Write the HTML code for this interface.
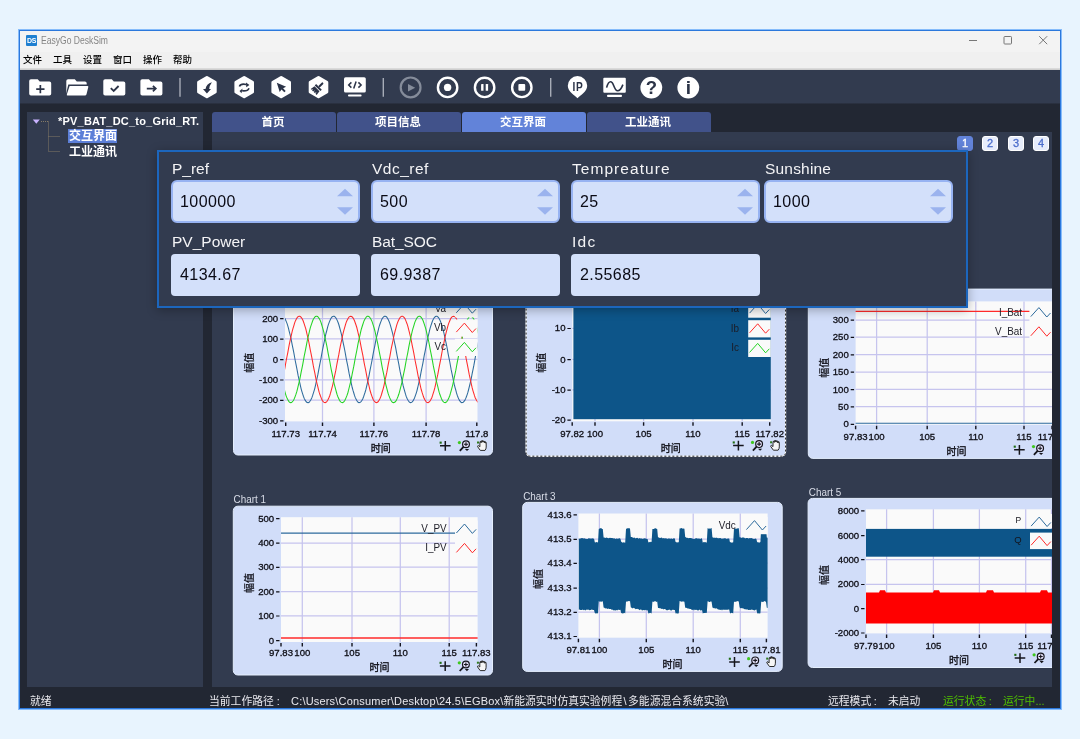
<!DOCTYPE html><html lang="zh"><head><meta charset="utf-8"><title>EasyGo DeskSim</title><style>
*{margin:0;padding:0;box-sizing:border-box}
html,body{width:1080px;height:739px;overflow:hidden}
body{background:#e8f4fe;font-family:"Liberation Sans","Noto Sans CJK SC",sans-serif;position:relative}
.abs{position:absolute}
#win{position:absolute;left:19px;top:30px;width:1042px;height:679px;background:#222733;border:1px solid #2b78dc;box-shadow:0 0 0 1px #86bcfb;overflow:hidden}
/* coordinates inside #inner are page coordinates */
#inner{position:absolute;left:-20px;top:-31px;width:1080px;height:739px;will-change:transform}
#title{left:20px;top:30px;width:1041px;height:22px;background:#f3f3f3}
#menu{left:20px;top:52px;width:1041px;height:17px;background:#f0f0f0}
#menuline{left:20px;top:68px;width:1041px;height:2px;background:linear-gradient(#e0e0e0,#c8c8c8)}
#tb{left:20px;top:70px;width:1041px;height:34px;background:linear-gradient(#323b4f 0,#323b4f 32.8px,#262b39 33.8px)}
.mi{position:absolute;top:54px;font-size:9.5px;font-weight:500;color:#000;line-height:12px;white-space:nowrap}
#ttl{left:41px;top:34.5px;font-size:10px;transform:scaleX(0.855);transform-origin:0 0;color:#858585;line-height:12px;white-space:nowrap}
#logo{left:26px;top:35px;width:11px;height:11px;background:#1f7fd0;color:#fff;font-size:7px;font-weight:bold;line-height:11px;text-align:center;letter-spacing:-0.4px;border-radius:1px}
#lp{left:27px;top:112px;width:176px;height:575px;background:#323b4f}
#rp{left:212px;top:132px;width:840px;height:555px;background:#323b4f;overflow:hidden}
.tab{position:absolute;top:112px;height:21px;width:124px;background:#41528a;color:#fff;font-weight:bold;font-size:11.5px;text-indent:-2px;line-height:20px;text-align:center;border-radius:3px 3px 0 0}
.tab.on{background:#6283d9}
.pg{position:absolute;top:136px;width:16px;height:15px;border-radius:3px;font-size:11px;line-height:13px;-webkit-text-stroke:0.3px;text-align:center;border:1px solid #fff;background:#e6ecfb;color:#4b6dcc;font-weight:normal}
.pg.on{background:#6283d9;border-color:#6283d9;color:#fff}
.st{position:absolute;top:694.6px;font-size:10.8px;line-height:13px;color:#e8e8ee;white-space:nowrap}
.tree{position:absolute;color:#fff;font-weight:bold;white-space:nowrap}
</style></head><body>
<div id="win"><div id="inner">
<div id="title" class="abs"></div>
<div id="logo" class="abs">DS</div>
<div id="ttl" class="abs">EasyGo DeskSim</div>
<svg class="abs" style="left:960px;top:30px" width="100" height="22" viewBox="0 0 100 22"><path d="M9 10.5h8" stroke="#777" stroke-width="1" fill="none"/><rect x="44" y="6.5" width="7.5" height="7.5" rx="0.8" stroke="#777" stroke-width="1" fill="none"/><path d="M79.2 6.2l8 8M87.2 6.2l-8 8" stroke="#777" stroke-width="1" fill="none"/></svg>
<div id="menu" class="abs"></div><div id="menuline" class="abs"></div>
<div class="mi" style="left:23px">文件</div>
<div class="mi" style="left:53px">工具</div>
<div class="mi" style="left:83px">设置</div>
<div class="mi" style="left:113px">窗口</div>
<div class="mi" style="left:143px">操作</div>
<div class="mi" style="left:173px">帮助</div>
<div id="tb" class="abs"></div>
<svg class="abs" style="left:20px;top:70px" width="1041" height="34" viewBox="20 70 1041 34"><path d="M29.2 81.1 Q29.2 79.3 31.0 79.3 H37.7 L39.7 81.5 H49.400000000000006 Q51.2 81.5 51.2 83.3 V93.7 Q51.2 95.5 49.400000000000006 95.5 H31.0 Q29.2 95.5 29.2 93.7 Z" fill="#fff"/><path d="M36.2 89.2h8.3M40.35 85.1v8.2" stroke="#2b3347" stroke-width="1.7" fill="none"/><path d="M66.3 81.1 Q66.3 79.3 68.1 79.3 H74.8 L76.8 81.5 H84.89999999999999 Q86.69999999999999 81.5 86.69999999999999 83.3 V93.7 Q86.69999999999999 95.5 84.89999999999999 95.5 H68.1 Q66.3 95.5 66.3 93.7 Z" fill="#fff"/><path d="M68.3 84.6H89.3L86.8 96.5H65.3Z" fill="#323b4f"/><path d="M69.6 85.9H87.5Q88.6 85.9 88.3 87L86.5 94.3Q86.2 95.5 84.9 95.5H67.5Q66.5 95.5 66.9 94.3Z" fill="#fff"/><path d="M103.3 81.1 Q103.3 79.3 105.1 79.3 H111.8 L113.8 81.5 H123.5 Q125.3 81.5 125.3 83.3 V93.7 Q125.3 95.5 123.5 95.5 H105.1 Q103.3 95.5 103.3 93.7 Z" fill="#fff"/><path d="M110.8 88.2l2.9 2.8 4.9-5" stroke="#2b3347" stroke-width="1.8" fill="none"/><path d="M140.4 81.1 Q140.4 79.3 142.20000000000002 79.3 H148.9 L150.9 81.5 H160.6 Q162.4 81.5 162.4 83.3 V93.7 Q162.4 95.5 160.6 95.5 H142.20000000000002 Q140.4 95.5 140.4 93.7 Z" fill="#fff"/><path d="M146.8 88.6h8.4M152.9 85.9l2.9 2.7-2.9 2.7" stroke="#2b3347" stroke-width="1.7" fill="none"/><path d="M180.0 78v18.8" stroke="#a7acb7" stroke-width="1.4"/><path d="M383.3 78v18.8" stroke="#a7acb7" stroke-width="1.4"/><path d="M550.7 78v18.8" stroke="#a7acb7" stroke-width="1.4"/><polygon points="206.90,77.70 215.10,82.45 215.10,91.95 206.90,96.70 198.70,91.95 198.70,82.45" fill="#fff" stroke="#fff" stroke-width="3.2" stroke-linejoin="round"/><polygon points="244.20,77.70 252.40,82.45 252.40,91.95 244.20,96.70 236.00,91.95 236.00,82.45" fill="#fff" stroke="#fff" stroke-width="3.2" stroke-linejoin="round"/><polygon points="281.20,77.70 289.40,82.45 289.40,91.95 281.20,96.70 273.00,91.95 273.00,82.45" fill="#fff" stroke="#fff" stroke-width="3.2" stroke-linejoin="round"/><polygon points="318.50,77.70 326.70,82.45 326.70,91.95 318.50,96.70 310.30,91.95 310.30,82.45" fill="#fff" stroke="#fff" stroke-width="3.2" stroke-linejoin="round"/><path d="M211.9 82.2 Q206.2 84.0 205.5 88.9 L203.0 88.9 L206.9 93.4 L211.0 88.9 L209.2 88.9 Q209.5 85.4 211.9 82.2 Z" fill="#2b3347"/><path d="M239.4 86.5 Q240.6 83.3 246.3 84.5" stroke="#2b3347" stroke-width="1.6" fill="none"/><path d="M246.0 82.6 L249.4 85.1 L246.3 87.2 Z" fill="#2b3347"/><path d="M249.0 88.2 Q247.8 91.4 242.1 90.8" stroke="#2b3347" stroke-width="1.6" fill="none"/><path d="M242.6 88.6 L239.5 90.9 L241.5 93.3 Z" fill="#2b3347"/><path d="M276.8 82.8 L286.1 86.7 L283.1 88.2 L285.7 91.0 L284.3 92.3 L281.5 89.6 L279.7 92.1 Z" fill="#2b3347"/><g transform="translate(-0.3 0.3) rotate(45 318.5 87.3)" fill="#2b3347"><rect x="317.5" y="80.4" width="2" height="6" rx="1"/><rect x="314.5" y="86.2" width="8" height="2"/><path d="M315.0 89h7l0.6 4.6h-1.6l-.5-2-.5 2h-1.5l-.4-2-.5 2h-1.5l-.4-2-.5 2h-1z"/></g><rect x="344" y="77.2" width="21.8" height="15.3" rx="1.6" fill="#fff"/><rect x="348" y="94.6" width="13.6" height="1.9" rx="0.9" fill="#fff"/><path d="M351.4 82.4l-2.7 2.6 2.7 2.6M358.4 82.4l2.7 2.6-2.7 2.6M356.1 81.5l-2.4 7" stroke="#2b3347" stroke-width="1.5" fill="none"/><circle cx="410.6" cy="87.4" r="9.9" fill="none" stroke="#858c9a" stroke-width="2.2"/><path d="M408 83.9v7.6l7.2-3.8z" fill="#858c9a"/><circle cx="447.6" cy="87.4" r="9.7" fill="none" stroke="#fff" stroke-width="2.4"/><circle cx="447.6" cy="87.4" r="3.7" fill="#fff"/><circle cx="484.6" cy="87.4" r="9.7" fill="none" stroke="#fff" stroke-width="2.4"/><rect x="481.1" y="84" width="2.4" height="6.8" rx="0.4" fill="#fff"/><rect x="485.7" y="84" width="2.4" height="6.8" rx="0.4" fill="#fff"/><circle cx="521.8" cy="87.4" r="9.7" fill="none" stroke="#fff" stroke-width="2.4"/><rect x="518.4" y="84" width="6.8" height="6.8" rx="1" fill="#fff"/><path d="M577.5 98.3 C574.5 95.2 567.8 91.6 567.8 85.8 A9.7 9.7 0 0 1 587.2 85.8 C587.2 91.6 580.5 95.2 577.5 98.3Z" fill="#fff"/><text transform="translate(578 90.6) scale(0.78 1)" x="0" y="0" letter-spacing="0.9" font-size="13" font-weight="bold" text-anchor="middle" fill="#2b3347" font-family="Liberation Sans, sans-serif">IP</text><rect x="603.3" y="77.8" width="22.5" height="15" rx="1" fill="#fff"/><rect x="607" y="94.8" width="15" height="2.1" rx="1" fill="#fff"/><path d="M606.6 87.6C607.8 83.2 609.4 81.6 610.9 81.8C614 82.2 613.8 90.4 617.6 90.8C620 91 621.6 88 622.9 84.6" stroke="#2b3347" stroke-width="1.6" fill="none"/><circle cx="651.3" cy="87.6" r="10.9" fill="#fff"/><text x="651.4" y="94.3" font-size="18.5" font-weight="bold" text-anchor="middle" fill="#2b3347" font-family="Liberation Sans, sans-serif">?</text><circle cx="688.3" cy="87.6" r="10.9" fill="#fff"/><text x="688.5" y="94.4" font-size="19" font-weight="bold" text-anchor="middle" fill="#2b3347" font-family="Liberation Sans, sans-serif">i</text></svg>
<div id="lp" class="abs"></div>
<svg class="abs" style="left:27px;top:112px" width="50" height="50" viewBox="27 112 50 50"><path d="M32.8 119.6h7l-3.5 4.2z" fill="#c9b3ff"/><path d="M41 121.5h8M48.5 121.5v30M48.5 136.5h11M48.5 151.5h11" stroke="#857a66" stroke-width="1" stroke-dasharray="1 1" fill="none"/></svg>
<div class="tree" style="left:58px;top:115px;font-size:11px;line-height:13px;letter-spacing:0.21px" id="troot">*PV_BAT_DC_to_Grid_RT.</div>
<div class="abs" style="left:68px;top:129px;width:49px;height:14px;background:#5c7fd8"></div>
<div class="tree" style="left:69px;top:129px;font-size:12px;line-height:14px">交互界面</div>
<div class="tree" style="left:69px;top:145px;font-size:12px;line-height:14px">工业通讯</div>
<div class="tab" style="left:212px">首页</div>
<div class="tab" style="left:337px">项目信息</div>
<div class="tab on" style="left:462px">交互界面</div>
<div class="tab" style="left:587px">工业通讯</div>
<div id="rp" class="abs"></div>
<svg class="abs" style="left:212px;top:132px" width="840" height="555" viewBox="212 132 840 555" font-family="Liberation Sans, Noto Sans CJK SC, sans-serif"><rect x="233.5" y="286.0" width="259.0" height="169.0" rx="4.5" fill="#d1ddf9" stroke="#e4eefd" stroke-width="1"/><rect x="285.0" y="297.0" width="192.5" height="124.4" fill="#fafafa"/><path d="M285.0 318.5H477.5M285.0 338.9H477.5M285.0 359.4H477.5M285.0 379.8H477.5M285.0 400.2H477.5M322.5 297.0V421.4M373.9 297.0V421.4M426.1 297.0V421.4" stroke="#c6c4ee" stroke-width="1.25" fill="none"/><clipPath id="ca"><rect x="285" y="297" width="192.5" height="124.4"/></clipPath><g clip-path="url(#ca)"><path d="M284.0 317.2L284.8 318.3L285.5 319.7L286.2 321.4L287.0 323.4L287.8 325.8L288.5 328.4L289.2 331.3L290.0 334.4L290.8 337.7L291.5 341.2L292.2 344.9L293.0 348.7L293.8 352.6L294.5 356.5L295.2 360.5L296.0 364.4L296.8 368.3L297.5 372.1L298.2 375.9L299.0 379.5L299.8 382.9L300.5 386.1L301.2 389.1L302.0 391.8L302.8 394.3L303.5 396.5L304.2 398.4L305.0 399.9L305.8 401.1L306.5 402.0L307.2 402.5L308.0 402.6L308.8 402.4L309.5 401.8L310.2 400.8L311.0 399.5L311.8 397.9L312.5 395.9L313.2 393.7L314.0 391.1L314.8 388.3L315.5 385.3L316.2 382.0L317.0 378.5L317.8 374.9L318.5 371.1L319.2 367.3L320.0 363.4L320.8 359.4L321.5 355.4L322.2 351.5L323.0 347.7L323.8 343.9L324.5 340.3L325.2 336.8L326.0 333.5L326.8 330.5L327.5 327.7L328.2 325.1L329.0 322.9L329.8 320.9L330.5 319.3L331.2 318.0L332.0 317.0L332.8 316.4L333.5 316.2L334.2 316.3L335.0 316.8L335.8 317.7L336.5 318.9L337.2 320.4L338.0 322.3L338.8 324.5L339.5 327.0L340.2 329.7L341.0 332.7L341.8 335.9L342.5 339.3L343.2 342.9L344.0 346.7L344.8 350.5L345.5 354.4L346.2 358.3L347.0 362.3L347.8 366.2L348.5 370.1L349.2 373.9L350.0 377.6L350.8 381.1L351.5 384.4L352.2 387.5L353.0 390.4L353.8 393.0L354.5 395.4L355.2 397.4L356.0 399.1L356.8 400.5L357.5 401.6L358.2 402.2L359.0 402.6L359.8 402.5L360.5 402.1L361.2 401.4L362.0 400.3L362.8 398.8L363.5 397.0L364.2 394.9L365.0 392.5L365.8 389.9L366.5 386.9L367.2 383.8L368.0 380.4L368.8 376.8L369.5 373.2L370.2 369.3L371.0 365.5L371.8 361.5L372.5 357.6L373.2 353.6L374.0 349.7L374.8 345.9L375.5 342.2L376.2 338.6L377.0 335.3L377.8 332.1L378.5 329.1L379.2 326.4L380.0 324.0L380.8 321.9L381.5 320.1L382.2 318.6L383.0 317.5L383.8 316.7L384.5 316.3L385.2 316.2L386.0 316.5L386.8 317.2L387.5 318.2L388.2 319.6L389.0 321.3L389.8 323.3L390.5 325.6L391.2 328.2L392.0 331.1L392.8 334.2L393.5 337.5L394.2 341.0L395.0 344.7L395.8 348.4L396.5 352.3L397.2 356.2L398.0 360.2L398.8 364.1L399.5 368.1L400.2 371.9L401.0 375.6L401.8 379.2L402.5 382.7L403.2 385.9L404.0 388.9L404.8 391.7L405.5 394.2L406.2 396.4L407.0 398.3L407.8 399.8L408.5 401.0L409.2 401.9L410.0 402.4L410.8 402.6L411.5 402.4L412.2 401.8L413.0 400.9L413.8 399.6L414.5 398.0L415.2 396.1L416.0 393.8L416.8 391.3L417.5 388.5L418.2 385.5L419.0 382.2L419.8 378.8L420.5 375.1L421.2 371.4L422.0 367.5L422.8 363.6L423.5 359.7L424.2 355.7L425.0 351.8L425.8 347.9L426.5 344.2L427.2 340.5L428.0 337.0L428.8 333.8L429.5 330.7L430.2 327.8L431.0 325.3L431.8 323.0L432.5 321.0L433.2 319.4L434.0 318.0L434.8 317.1L435.5 316.5L436.2 316.2L437.0 316.3L437.8 316.8L438.5 317.6L439.2 318.8L440.0 320.3L440.8 322.2L441.5 324.3L442.2 326.8L443.0 329.5L443.8 332.5L444.5 335.7L445.2 339.1L446.0 342.7L446.8 346.4L447.5 350.2L448.2 354.1L449.0 358.1L449.8 362.0L450.5 366.0L451.2 369.9L452.0 373.7L452.8 377.3L453.5 380.8L454.2 384.2L455.0 387.3L455.8 390.2L456.5 392.9L457.2 395.2L458.0 397.3L458.8 399.0L459.5 400.4L460.2 401.5L461.0 402.2L461.8 402.6L462.5 402.5L463.2 402.2L464.0 401.4L464.8 400.4L465.5 398.9L466.2 397.2L467.0 395.1L467.8 392.7L468.5 390.0L469.2 387.1L470.0 384.0L470.8 380.6L471.5 377.1L472.2 373.4L473.0 369.6L473.8 365.7L474.5 361.8L475.2 357.8L476.0 353.9L476.8 350.0L477.5 346.2L478.2 342.4" stroke="#2c6a9c" stroke-width="1.05" fill="none"/><path d="M284.0 372.1L284.8 368.3L285.5 364.4L286.2 360.5L287.0 356.5L287.8 352.6L288.5 348.7L289.2 344.9L290.0 341.2L290.8 337.7L291.5 334.4L292.2 331.3L293.0 328.4L293.8 325.8L294.5 323.4L295.2 321.4L296.0 319.7L296.8 318.3L297.5 317.2L298.2 316.6L299.0 316.2L299.8 316.3L300.5 316.7L301.2 317.4L302.0 318.5L302.8 320.0L303.5 321.8L304.2 323.9L305.0 326.3L305.8 328.9L306.5 331.9L307.2 335.0L308.0 338.4L308.8 342.0L309.5 345.6L310.2 349.5L311.0 353.3L311.8 357.3L312.5 361.2L313.2 365.2L314.0 369.1L314.8 372.9L315.5 376.6L316.2 380.2L317.0 383.5L317.8 386.7L318.5 389.7L319.2 392.4L320.0 394.8L320.8 396.9L321.5 398.7L322.2 400.2L323.0 401.3L323.8 402.1L324.5 402.5L325.2 402.6L326.0 402.3L326.8 401.6L327.5 400.6L328.2 399.2L329.0 397.5L329.8 395.5L330.5 393.2L331.2 390.6L332.0 387.7L332.8 384.6L333.5 381.3L334.2 377.8L335.0 374.1L335.8 370.4L336.5 366.5L337.2 362.6L338.0 358.6L338.8 354.7L339.5 350.7L340.2 346.9L341.0 343.2L341.8 339.6L342.5 336.1L343.2 332.9L344.0 329.9L344.8 327.1L345.5 324.6L346.2 322.4L347.0 320.5L347.8 319.0L348.5 317.8L349.2 316.9L350.0 316.4L350.8 316.2L351.5 316.4L352.2 317.0L353.0 317.9L353.8 319.2L354.5 320.8L355.2 322.7L356.0 325.0L356.8 327.5L357.5 330.3L358.2 333.3L359.0 336.6L359.8 340.0L360.5 343.7L361.2 347.4L362.0 351.3L362.8 355.2L363.5 359.1L364.2 363.1L365.0 367.0L365.8 370.9L366.5 374.6L367.2 378.3L368.0 381.8L368.8 385.0L369.5 388.1L370.2 391.0L371.0 393.5L371.8 395.8L372.5 397.8L373.2 399.4L374.0 400.8L374.8 401.7L375.5 402.3L376.2 402.6L377.0 402.5L377.8 402.0L378.5 401.2L379.2 400.0L380.0 398.5L380.8 396.6L381.5 394.5L382.2 392.0L383.0 389.3L383.8 386.3L384.5 383.1L385.2 379.7L386.0 376.1L386.8 372.4L387.5 368.6L388.2 364.7L389.0 360.7L389.8 356.8L390.5 352.8L391.2 348.9L392.0 345.1L392.8 341.5L393.5 338.0L394.2 334.6L395.0 331.5L395.8 328.6L396.5 325.9L397.2 323.6L398.0 321.5L398.8 319.8L399.5 318.4L400.2 317.3L401.0 316.6L401.8 316.2L402.5 316.3L403.2 316.6L404.0 317.4L404.8 318.4L405.5 319.9L406.2 321.6L407.0 323.7L407.8 326.1L408.5 328.8L409.2 331.7L410.0 334.8L410.8 338.2L411.5 341.7L412.2 345.4L413.0 349.2L413.8 353.1L414.5 357.0L415.2 361.0L416.0 364.9L416.8 368.8L417.5 372.6L418.2 376.4L419.0 379.9L419.8 383.3L420.5 386.5L421.2 389.5L422.0 392.2L422.8 394.6L423.5 396.8L424.2 398.6L425.0 400.1L425.8 401.3L426.5 402.1L427.2 402.5L428.0 402.6L428.8 402.3L429.5 401.7L430.2 400.7L431.0 399.3L431.8 397.7L432.5 395.7L433.2 393.4L434.0 390.8L434.8 387.9L435.5 384.8L436.2 381.5L437.0 378.0L437.8 374.4L438.5 370.6L439.2 366.8L440.0 362.8L440.8 358.9L441.5 354.9L442.2 351.0L443.0 347.2L443.8 343.4L444.5 339.8L445.2 336.4L446.0 333.1L446.8 330.1L447.5 327.3L448.2 324.8L449.0 322.6L449.8 320.7L450.5 319.1L451.2 317.8L452.0 316.9L452.8 316.4L453.5 316.2L454.2 316.4L455.0 316.9L455.8 317.8L456.5 319.1L457.2 320.7L458.0 322.6L458.8 324.8L459.5 327.3L460.2 330.1L461.0 333.1L461.8 336.4L462.5 339.8L463.2 343.4L464.0 347.2L464.8 351.0L465.5 354.9L466.2 358.9L467.0 362.8L467.8 366.8L468.5 370.6L469.2 374.4L470.0 378.0L470.8 381.5L471.5 384.8L472.2 387.9L473.0 390.8L473.8 393.4L474.5 395.7L475.2 397.7L476.0 399.3L476.8 400.7L477.5 401.7L478.2 402.3" stroke="#ff2a2a" stroke-width="1.05" fill="none"/><path d="M284.0 388.5L284.8 391.3L285.5 393.8L286.2 396.1L287.0 398.0L287.8 399.6L288.5 400.9L289.2 401.8L290.0 402.4L290.8 402.6L291.5 402.4L292.2 401.9L293.0 401.0L293.8 399.8L294.5 398.3L295.2 396.4L296.0 394.2L296.8 391.7L297.5 388.9L298.2 385.9L299.0 382.7L299.8 379.2L300.5 375.6L301.2 371.9L302.0 368.1L302.8 364.1L303.5 360.2L304.2 356.2L305.0 352.3L305.8 348.4L306.5 344.7L307.2 341.0L308.0 337.5L308.8 334.2L309.5 331.1L310.2 328.2L311.0 325.6L311.8 323.3L312.5 321.3L313.2 319.6L314.0 318.2L314.8 317.2L315.5 316.5L316.2 316.2L317.0 316.3L317.8 316.7L318.5 317.5L319.2 318.6L320.0 320.1L320.8 321.9L321.5 324.0L322.2 326.4L323.0 329.1L323.8 332.1L324.5 335.3L325.2 338.6L326.0 342.2L326.8 345.9L327.5 349.7L328.2 353.6L329.0 357.6L329.8 361.5L330.5 365.5L331.2 369.3L332.0 373.2L332.8 376.8L333.5 380.4L334.2 383.8L335.0 386.9L335.8 389.9L336.5 392.5L337.2 394.9L338.0 397.0L338.8 398.8L339.5 400.3L340.2 401.4L341.0 402.1L341.8 402.5L342.5 402.6L343.2 402.2L344.0 401.6L344.8 400.5L345.5 399.1L346.2 397.4L347.0 395.4L347.8 393.0L348.5 390.4L349.2 387.5L350.0 384.4L350.8 381.1L351.5 377.6L352.2 373.9L353.0 370.1L353.8 366.2L354.5 362.3L355.2 358.3L356.0 354.4L356.8 350.5L357.5 346.7L358.2 342.9L359.0 339.3L359.8 335.9L360.5 332.7L361.2 329.7L362.0 327.0L362.8 324.5L363.5 322.3L364.2 320.4L365.0 318.9L365.8 317.7L366.5 316.8L367.2 316.3L368.0 316.2L368.8 316.4L369.5 317.0L370.2 318.0L371.0 319.3L371.8 320.9L372.5 322.9L373.2 325.1L374.0 327.7L374.8 330.5L375.5 333.5L376.2 336.8L377.0 340.3L377.8 343.9L378.5 347.7L379.2 351.5L380.0 355.4L380.8 359.4L381.5 363.4L382.2 367.3L383.0 371.1L383.8 374.9L384.5 378.5L385.2 382.0L386.0 385.3L386.8 388.3L387.5 391.1L388.2 393.7L389.0 395.9L389.8 397.9L390.5 399.5L391.2 400.8L392.0 401.8L392.8 402.4L393.5 402.6L394.2 402.5L395.0 402.0L395.8 401.1L396.5 399.9L397.2 398.4L398.0 396.5L398.8 394.3L399.5 391.8L400.2 389.1L401.0 386.1L401.8 382.9L402.5 379.5L403.2 375.9L404.0 372.1L404.8 368.3L405.5 364.4L406.2 360.5L407.0 356.5L407.8 352.6L408.5 348.7L409.2 344.9L410.0 341.2L410.8 337.7L411.5 334.4L412.2 331.3L413.0 328.4L413.8 325.8L414.5 323.4L415.2 321.4L416.0 319.7L416.8 318.3L417.5 317.2L418.2 316.6L419.0 316.2L419.8 316.3L420.5 316.7L421.2 317.4L422.0 318.5L422.8 320.0L423.5 321.8L424.2 323.9L425.0 326.3L425.8 328.9L426.5 331.9L427.2 335.0L428.0 338.4L428.8 342.0L429.5 345.6L430.2 349.5L431.0 353.3L431.8 357.3L432.5 361.2L433.2 365.2L434.0 369.1L434.8 372.9L435.5 376.6L436.2 380.2L437.0 383.5L437.8 386.7L438.5 389.7L439.2 392.4L440.0 394.8L440.8 396.9L441.5 398.7L442.2 400.2L443.0 401.3L443.8 402.1L444.5 402.5L445.2 402.6L446.0 402.3L446.8 401.6L447.5 400.6L448.2 399.2L449.0 397.5L449.8 395.5L450.5 393.2L451.2 390.6L452.0 387.7L452.8 384.6L453.5 381.3L454.2 377.8L455.0 374.1L455.8 370.4L456.5 366.5L457.2 362.6L458.0 358.6L458.8 354.7L459.5 350.7L460.2 346.9L461.0 343.2L461.8 339.6L462.5 336.1L463.2 332.9L464.0 329.9L464.8 327.1L465.5 324.6L466.2 322.4L467.0 320.5L467.8 319.0L468.5 317.8L469.2 316.9L470.0 316.4L470.8 316.2L471.5 316.4L472.2 317.0L473.0 317.9L473.8 319.2L474.5 320.8L475.2 322.7L476.0 325.0L476.8 327.5L477.5 330.3L478.2 333.3" stroke="#22d422" stroke-width="1.05" fill="none"/></g><rect x="454.9" y="300.2" width="22.6" height="17.2" fill="#fafafa"/><path d="M456.3 312.8L464.4 303.8L472.3 313.2L476.0 309.2" stroke="#2c6a9c" stroke-width="1" fill="none"/><text transform="translate(446.0 311.8) scale(0.99 1)" font-size="10" text-anchor="end" fill="#1c1c26" >Va</text><rect x="454.9" y="319.5" width="22.6" height="17.2" fill="#fafafa"/><path d="M456.3 332.1L464.4 323.1L472.3 332.5L476.0 328.5" stroke="#ff2a2a" stroke-width="1" fill="none"/><text transform="translate(446.0 331.1) scale(0.99 1)" font-size="10" text-anchor="end" fill="#1c1c26" >Vb</text><rect x="454.9" y="338.8" width="22.6" height="17.2" fill="#fafafa"/><path d="M456.3 351.4L464.4 342.4L472.3 351.8L476.0 347.8" stroke="#22d422" stroke-width="1" fill="none"/><text transform="translate(446.0 350.4) scale(0.99 1)" font-size="10" text-anchor="end" fill="#1c1c26" >Vc</text><text transform="translate(278.2 321.6) scale(0.99 1)" font-size="9.7" text-anchor="end" fill="#0e0e16"  stroke="#0e0e16" stroke-width="0.3">200</text><text transform="translate(278.2 342.0) scale(0.99 1)" font-size="9.7" text-anchor="end" fill="#0e0e16"  stroke="#0e0e16" stroke-width="0.3">100</text><text transform="translate(278.2 362.5) scale(0.99 1)" font-size="9.7" text-anchor="end" fill="#0e0e16"  stroke="#0e0e16" stroke-width="0.3">0</text><text transform="translate(278.2 382.9) scale(0.99 1)" font-size="9.7" text-anchor="end" fill="#0e0e16"  stroke="#0e0e16" stroke-width="0.3">-100</text><text transform="translate(278.2 403.3) scale(0.99 1)" font-size="9.7" text-anchor="end" fill="#0e0e16"  stroke="#0e0e16" stroke-width="0.3">-200</text><text transform="translate(278.2 423.7) scale(0.99 1)" font-size="9.7" text-anchor="end" fill="#0e0e16"  stroke="#0e0e16" stroke-width="0.3">-300</text><path d="M280.1 318.7h3.4M280.1 339.1h3.4M280.1 359.6h3.4M280.1 380.0h3.4M280.1 400.4h3.4M280.1 420.8h3.4" stroke="#0e0e16" stroke-width="1.2" fill="none"/><text transform="translate(285.7 436.8) scale(0.99 1)" font-size="9.7" text-anchor="middle" fill="#0e0e16"  stroke="#0e0e16" stroke-width="0.3">117.73</text><text transform="translate(322.5 436.8) scale(0.99 1)" font-size="9.7" text-anchor="middle" fill="#0e0e16"  stroke="#0e0e16" stroke-width="0.3">117.74</text><text transform="translate(373.9 436.8) scale(0.99 1)" font-size="9.7" text-anchor="middle" fill="#0e0e16"  stroke="#0e0e16" stroke-width="0.3">117.76</text><text transform="translate(426.1 436.8) scale(0.99 1)" font-size="9.7" text-anchor="middle" fill="#0e0e16"  stroke="#0e0e16" stroke-width="0.3">117.78</text><text transform="translate(476.8 436.8) scale(0.99 1)" font-size="9.7" text-anchor="middle" fill="#0e0e16"  stroke="#0e0e16" stroke-width="0.3">117.8</text><path d="M285.7 422.4v3.5M322.5 422.4v3.5M373.9 422.4v3.5M426.1 422.4v3.5M476.8 422.4v3.5" stroke="#15151f" stroke-width="1.4" fill="none"/><text transform="translate(380.8 451.6) scale(1 1)" font-size="10" text-anchor="middle" fill="#0e0e16"  stroke="#0e0e16" stroke-width="0.3">时间</text><text transform="translate(252.6 362.8) rotate(-90)" font-size="10" text-anchor="middle" fill="#0e0e16" stroke="#0e0e16" stroke-width="0.22">幅值</text><path d="M440.0 445.8h10.6M445.3 441.0v9.8" stroke="#15151c" stroke-width="1.5" fill="none"/><rect x="439.6" y="441.6" width="2.1" height="2.1" fill="#1f6b12"/><circle cx="466.0" cy="444.3" r="3.4" fill="#e6e2fb" stroke="#15151c" stroke-width="1.2"/><path d="M463.5 446.9l-3.7 3.9" stroke="#15151c" stroke-width="1.8"/><path d="M464.0 444.3h4M466.0 442.3v4" stroke="#15151c" stroke-width="1.1"/><path d="M464.9 448.9h4.2l-2.1 2.1z" fill="#15151c"/><circle cx="459.4" cy="442.6" r="1.6" fill="#3fc81e"/><path transform="translate(482.1 445.6)" d="M-1.8 4.8 L-4.4 1.2 Q-4.8 0 -3.6 0 L-2.2 1.2 V-3 Q-2.2 -4 -1.4 -4 Q-0.7 -4 -0.7 -3.2 V-4 Q-0.7 -4.9 0.1 -4.9 Q0.9 -4.9 0.9 -4 V-3.4 Q0.9 -4.3 1.7 -4.3 Q2.5 -4.3 2.5 -3.4 V-2.6 Q2.5 -3.4 3.3 -3.4 Q4.1 -3.4 4.1 -2.6 V1.5 Q4.1 3.4 2.9 4.8 Z" fill="#f6f6f6" stroke="#2a2a2a" stroke-width="1"/><path transform="translate(482.1 445.6)" d="M-2 -3.2 Q0.5 -5.6 4 -2.8" stroke="#333" stroke-width="1.6" fill="none"/><rect x="477.0" y="441.5" width="2" height="2" fill="#2f7a1c"/><rect x="526.1" y="287.2" width="259.5" height="169.0" rx="4.5" fill="#d1ddf9" stroke="#e4eefd" stroke-width="1"/><rect x="526.1" y="287.2" width="259.5" height="169.0" rx="4" fill="none" stroke="#fff" stroke-width="1"/><rect x="526.1" y="287.2" width="259.5" height="169.0" rx="4" fill="none" stroke="#222" stroke-width="1" stroke-dasharray="2 2"/><rect x="572.3" y="297.0" width="198.5" height="124.3" fill="#fafafa"/><path d="M572.3 328.3H770.8M572.3 359.4H770.8M572.3 389.9H770.8M595.0 297.0V421.3M643.6 297.0V421.3M693.0 297.0V421.3M742.2 297.0V421.3" stroke="#c6c4ee" stroke-width="1.25" fill="none"/><rect x="573.4" y="297" width="197.4" height="122.2" fill="#0d5589"/><rect x="748.2" y="300.5" width="22.6" height="17.2" fill="#fafafa"/><path d="M749.6 313.1L757.7 304.1L765.6 313.5L769.3 309.5" stroke="#2c6a9c" stroke-width="1" fill="none"/><text transform="translate(738.9 312.1) scale(0.99 1)" font-size="10" text-anchor="end" fill="#1c1c26" >Ia</text><rect x="748.2" y="320.2" width="22.6" height="17.2" fill="#fafafa"/><path d="M749.6 332.8L757.7 323.8L765.6 333.2L769.3 329.2" stroke="#ff2a2a" stroke-width="1" fill="none"/><text transform="translate(738.9 331.8) scale(0.99 1)" font-size="10" text-anchor="end" fill="#1c1c26" >Ib</text><rect x="748.2" y="339.8" width="22.6" height="17.2" fill="#fafafa"/><path d="M749.6 352.4L757.7 343.4L765.6 352.8L769.3 348.8" stroke="#22d422" stroke-width="1" fill="none"/><text transform="translate(738.9 351.4) scale(0.99 1)" font-size="10" text-anchor="end" fill="#1c1c26" >Ic</text><text transform="translate(565.5 331.4) scale(0.99 1)" font-size="9.7" text-anchor="end" fill="#0e0e16"  stroke="#0e0e16" stroke-width="0.3">10</text><text transform="translate(565.5 362.5) scale(0.99 1)" font-size="9.7" text-anchor="end" fill="#0e0e16"  stroke="#0e0e16" stroke-width="0.3">0</text><text transform="translate(565.5 393.0) scale(0.99 1)" font-size="9.7" text-anchor="end" fill="#0e0e16"  stroke="#0e0e16" stroke-width="0.3">-10</text><text transform="translate(565.5 423.1) scale(0.99 1)" font-size="9.7" text-anchor="end" fill="#0e0e16"  stroke="#0e0e16" stroke-width="0.3">-20</text><path d="M567.4 328.5h3.4M567.4 359.6h3.4M567.4 390.1h3.4M567.4 420.2h3.4" stroke="#0e0e16" stroke-width="1.2" fill="none"/><text transform="translate(572.2 436.8) scale(0.99 1)" font-size="9.7" text-anchor="middle" fill="#0e0e16"  stroke="#0e0e16" stroke-width="0.3">97.82</text><text transform="translate(595.0 436.8) scale(0.99 1)" font-size="9.7" text-anchor="middle" fill="#0e0e16"  stroke="#0e0e16" stroke-width="0.3">100</text><text transform="translate(643.6 436.8) scale(0.99 1)" font-size="9.7" text-anchor="middle" fill="#0e0e16"  stroke="#0e0e16" stroke-width="0.3">105</text><text transform="translate(693.0 436.8) scale(0.99 1)" font-size="9.7" text-anchor="middle" fill="#0e0e16"  stroke="#0e0e16" stroke-width="0.3">110</text><text transform="translate(742.2 436.8) scale(0.99 1)" font-size="9.7" text-anchor="middle" fill="#0e0e16"  stroke="#0e0e16" stroke-width="0.3">115</text><text transform="translate(769.7 436.8) scale(0.99 1)" font-size="9.7" text-anchor="middle" fill="#0e0e16"  stroke="#0e0e16" stroke-width="0.3">117.82</text><path d="M572.2 422.3v3.5M595.0 422.3v3.5M643.6 422.3v3.5M693.0 422.3v3.5M742.2 422.3v3.5M769.7 422.3v3.5" stroke="#15151f" stroke-width="1.4" fill="none"/><text transform="translate(670.8 451.6) scale(1 1)" font-size="10" text-anchor="middle" fill="#0e0e16"  stroke="#0e0e16" stroke-width="0.3">时间</text><text transform="translate(545.3 362.8) rotate(-90)" font-size="10" text-anchor="middle" fill="#0e0e16" stroke="#0e0e16" stroke-width="0.22">幅值</text><path d="M733.1 445.6h10.6M738.4 440.8v9.8" stroke="#15151c" stroke-width="1.5" fill="none"/><rect x="732.7" y="441.4" width="2.1" height="2.1" fill="#1f6b12"/><circle cx="759.1" cy="444.1" r="3.4" fill="#e6e2fb" stroke="#15151c" stroke-width="1.2"/><path d="M756.6 446.7l-3.7 3.9" stroke="#15151c" stroke-width="1.8"/><path d="M757.1 444.1h4M759.1 442.1v4" stroke="#15151c" stroke-width="1.1"/><path d="M758.0 448.7h4.2l-2.1 2.1z" fill="#15151c"/><circle cx="752.5" cy="442.4" r="1.6" fill="#3fc81e"/><path transform="translate(775.2 445.4)" d="M-1.8 4.8 L-4.4 1.2 Q-4.8 0 -3.6 0 L-2.2 1.2 V-3 Q-2.2 -4 -1.4 -4 Q-0.7 -4 -0.7 -3.2 V-4 Q-0.7 -4.9 0.1 -4.9 Q0.9 -4.9 0.9 -4 V-3.4 Q0.9 -4.3 1.7 -4.3 Q2.5 -4.3 2.5 -3.4 V-2.6 Q2.5 -3.4 3.3 -3.4 Q4.1 -3.4 4.1 -2.6 V1.5 Q4.1 3.4 2.9 4.8 Z" fill="#f6f6f6" stroke="#2a2a2a" stroke-width="1"/><path transform="translate(775.2 445.4)" d="M-2 -3.2 Q0.5 -5.6 4 -2.8" stroke="#333" stroke-width="1.6" fill="none"/><rect x="770.1" y="441.3" width="2" height="2" fill="#2f7a1c"/><rect x="808.3" y="289.1" width="259.0" height="169.3" rx="4.5" fill="#d1ddf9" stroke="#e4eefd" stroke-width="1"/><rect x="855.6" y="301.4" width="196.4" height="123.3" fill="#fafafa"/><path d="M855.6 320.0H1052.0M855.6 337.2H1052.0M855.6 354.7H1052.0M855.6 372.0H1052.0M855.6 389.4H1052.0M855.6 406.7H1052.0M876.6 301.4V424.7M927.2 301.4V424.7M975.8 301.4V424.7M1024.0 301.4V424.7" stroke="#c6c4ee" stroke-width="1.25" fill="none"/><path d="M855.6 311.4H1030" stroke="#ff2a2a" stroke-width="1.1"/><path d="M855.6 423.3H1052" stroke="#2c6a9c" stroke-width="1.1"/><rect x="1029.4" y="304.0" width="22.6" height="17.2" fill="#fafafa"/><path d="M1030.8 316.6L1038.9 307.6L1046.8 317.0L1050.5 313.0" stroke="#2c6a9c" stroke-width="1" fill="none"/><text transform="translate(1022.0 315.6) scale(0.99 1)" font-size="10" text-anchor="end" fill="#1c1c26" >I_Bat</text><rect x="1029.4" y="323.2" width="22.6" height="17.2" fill="#fafafa"/><path d="M1030.8 335.8L1038.9 326.8L1046.8 336.2L1050.5 332.2" stroke="#ff2a2a" stroke-width="1" fill="none"/><text transform="translate(1022.0 334.8) scale(0.99 1)" font-size="10" text-anchor="end" fill="#1c1c26" >V_Bat</text><text transform="translate(848.8 323.1) scale(0.99 1)" font-size="9.7" text-anchor="end" fill="#0e0e16"  stroke="#0e0e16" stroke-width="0.3">300</text><text transform="translate(848.8 340.3) scale(0.99 1)" font-size="9.7" text-anchor="end" fill="#0e0e16"  stroke="#0e0e16" stroke-width="0.3">250</text><text transform="translate(848.8 357.8) scale(0.99 1)" font-size="9.7" text-anchor="end" fill="#0e0e16"  stroke="#0e0e16" stroke-width="0.3">200</text><text transform="translate(848.8 375.1) scale(0.99 1)" font-size="9.7" text-anchor="end" fill="#0e0e16"  stroke="#0e0e16" stroke-width="0.3">150</text><text transform="translate(848.8 392.5) scale(0.99 1)" font-size="9.7" text-anchor="end" fill="#0e0e16"  stroke="#0e0e16" stroke-width="0.3">100</text><text transform="translate(848.8 409.8) scale(0.99 1)" font-size="9.7" text-anchor="end" fill="#0e0e16"  stroke="#0e0e16" stroke-width="0.3">50</text><text transform="translate(848.8 427.3) scale(0.99 1)" font-size="9.7" text-anchor="end" fill="#0e0e16"  stroke="#0e0e16" stroke-width="0.3">0</text><path d="M850.7 320.2h3.4M850.7 337.4h3.4M850.7 354.9h3.4M850.7 372.2h3.4M850.7 389.6h3.4M850.7 406.9h3.4M850.7 424.4h3.4" stroke="#0e0e16" stroke-width="1.2" fill="none"/><text transform="translate(855.6 440.2) scale(0.99 1)" font-size="9.7" text-anchor="middle" fill="#0e0e16"  stroke="#0e0e16" stroke-width="0.3">97.83</text><text transform="translate(876.6 440.2) scale(0.99 1)" font-size="9.7" text-anchor="middle" fill="#0e0e16"  stroke="#0e0e16" stroke-width="0.3">100</text><text transform="translate(927.2 440.2) scale(0.99 1)" font-size="9.7" text-anchor="middle" fill="#0e0e16"  stroke="#0e0e16" stroke-width="0.3">105</text><text transform="translate(975.8 440.2) scale(0.99 1)" font-size="9.7" text-anchor="middle" fill="#0e0e16"  stroke="#0e0e16" stroke-width="0.3">110</text><text transform="translate(1024.0 440.2) scale(0.99 1)" font-size="9.7" text-anchor="middle" fill="#0e0e16"  stroke="#0e0e16" stroke-width="0.3">115</text><text transform="translate(1052.0 440.2) scale(0.99 1)" font-size="9.7" text-anchor="middle" fill="#0e0e16"  stroke="#0e0e16" stroke-width="0.3">117.83</text><path d="M855.6 425.7v3.5M876.6 425.7v3.5M927.2 425.7v3.5M975.8 425.7v3.5M1024.0 425.7v3.5M1052.0 425.7v3.5" stroke="#15151f" stroke-width="1.4" fill="none"/><text transform="translate(956.4 454.8) scale(1 1)" font-size="10" text-anchor="middle" fill="#0e0e16"  stroke="#0e0e16" stroke-width="0.3">时间</text><text transform="translate(828.0 367.8) rotate(-90)" font-size="10" text-anchor="middle" fill="#0e0e16" stroke="#0e0e16" stroke-width="0.22">幅值</text><path d="M1014.1 449.8h10.6M1019.4 445.0v9.8" stroke="#15151c" stroke-width="1.5" fill="none"/><rect x="1013.7" y="445.6" width="2.1" height="2.1" fill="#1f6b12"/><circle cx="1040.1" cy="448.3" r="3.4" fill="#e6e2fb" stroke="#15151c" stroke-width="1.2"/><path d="M1037.6 450.9l-3.7 3.9" stroke="#15151c" stroke-width="1.8"/><path d="M1038.1 448.3h4M1040.1 446.3v4" stroke="#15151c" stroke-width="1.1"/><path d="M1039.0 452.9h4.2l-2.1 2.1z" fill="#15151c"/><circle cx="1033.5" cy="446.6" r="1.6" fill="#3fc81e"/><text transform="translate(233.6 503.4) scale(0.99 1)" font-size="10" text-anchor="start" fill="#d9dde8" >Chart 1</text><rect x="233.3" y="506.2" width="259.2" height="168.8" rx="4.5" fill="#d1ddf9" stroke="#e4eefd" stroke-width="1"/><rect x="281.0" y="517.2" width="196.6" height="124.8" fill="#fafafa"/><path d="M281.0 543.0H477.6M281.0 567.2H477.6M281.0 591.6H477.6M281.0 615.8H477.6M302.3 517.2V642.0M352.0 517.2V642.0M400.3 517.2V642.0M449.2 517.2V642.0" stroke="#c6c4ee" stroke-width="1.25" fill="none"/><path d="M281 533.1H455.6" stroke="#2c6a9c" stroke-width="1.1"/><path d="M281 638H477.6" stroke="#ff2a2a" stroke-width="1.3"/><rect x="455.0" y="520.4" width="22.6" height="17.2" fill="#fafafa"/><path d="M456.4 533.0L464.5 524.0L472.4 533.4L476.1 529.4" stroke="#2c6a9c" stroke-width="1" fill="none"/><text transform="translate(446.6 532.0) scale(0.99 1)" font-size="10" text-anchor="end" fill="#1c1c26" >V_PV</text><rect x="455.0" y="539.8" width="22.6" height="17.2" fill="#fafafa"/><path d="M456.4 552.4L464.5 543.4L472.4 552.8L476.1 548.8" stroke="#ff2a2a" stroke-width="1" fill="none"/><text transform="translate(446.6 551.4) scale(0.99 1)" font-size="10" text-anchor="end" fill="#1c1c26" >I_PV</text><text transform="translate(274.2 521.5) scale(0.99 1)" font-size="9.7" text-anchor="end" fill="#0e0e16"  stroke="#0e0e16" stroke-width="0.3">500</text><text transform="translate(274.2 546.1) scale(0.99 1)" font-size="9.7" text-anchor="end" fill="#0e0e16"  stroke="#0e0e16" stroke-width="0.3">400</text><text transform="translate(274.2 570.3) scale(0.99 1)" font-size="9.7" text-anchor="end" fill="#0e0e16"  stroke="#0e0e16" stroke-width="0.3">300</text><text transform="translate(274.2 594.7) scale(0.99 1)" font-size="9.7" text-anchor="end" fill="#0e0e16"  stroke="#0e0e16" stroke-width="0.3">200</text><text transform="translate(274.2 618.9) scale(0.99 1)" font-size="9.7" text-anchor="end" fill="#0e0e16"  stroke="#0e0e16" stroke-width="0.3">100</text><text transform="translate(274.2 643.6) scale(0.99 1)" font-size="9.7" text-anchor="end" fill="#0e0e16"  stroke="#0e0e16" stroke-width="0.3">0</text><path d="M276.1 518.6h3.4M276.1 543.2h3.4M276.1 567.4h3.4M276.1 591.8h3.4M276.1 616.0h3.4M276.1 640.7h3.4" stroke="#0e0e16" stroke-width="1.2" fill="none"/><text transform="translate(281.0 656.4) scale(0.99 1)" font-size="9.7" text-anchor="middle" fill="#0e0e16"  stroke="#0e0e16" stroke-width="0.3">97.83</text><text transform="translate(302.3 656.4) scale(0.99 1)" font-size="9.7" text-anchor="middle" fill="#0e0e16"  stroke="#0e0e16" stroke-width="0.3">100</text><text transform="translate(352.0 656.4) scale(0.99 1)" font-size="9.7" text-anchor="middle" fill="#0e0e16"  stroke="#0e0e16" stroke-width="0.3">105</text><text transform="translate(400.3 656.4) scale(0.99 1)" font-size="9.7" text-anchor="middle" fill="#0e0e16"  stroke="#0e0e16" stroke-width="0.3">110</text><text transform="translate(449.2 656.4) scale(0.99 1)" font-size="9.7" text-anchor="middle" fill="#0e0e16"  stroke="#0e0e16" stroke-width="0.3">115</text><text transform="translate(476.4 656.4) scale(0.99 1)" font-size="9.7" text-anchor="middle" fill="#0e0e16"  stroke="#0e0e16" stroke-width="0.3">117.83</text><path d="M281.0 643.0v3.5M302.3 643.0v3.5M352.0 643.0v3.5M400.3 643.0v3.5M449.2 643.0v3.5M476.4 643.0v3.5" stroke="#15151f" stroke-width="1.4" fill="none"/><text transform="translate(379.6 671.3) scale(1 1)" font-size="10" text-anchor="middle" fill="#0e0e16"  stroke="#0e0e16" stroke-width="0.3">时间</text><text transform="translate(252.6 583.0) rotate(-90)" font-size="10" text-anchor="middle" fill="#0e0e16" stroke="#0e0e16" stroke-width="0.22">幅值</text><path d="M439.9 666.0h10.6M445.2 661.2v9.8" stroke="#15151c" stroke-width="1.5" fill="none"/><rect x="439.5" y="661.8" width="2.1" height="2.1" fill="#1f6b12"/><circle cx="465.9" cy="664.5" r="3.4" fill="#e6e2fb" stroke="#15151c" stroke-width="1.2"/><path d="M463.4 667.1l-3.7 3.9" stroke="#15151c" stroke-width="1.8"/><path d="M463.9 664.5h4M465.9 662.5v4" stroke="#15151c" stroke-width="1.1"/><path d="M464.8 669.1h4.2l-2.1 2.1z" fill="#15151c"/><circle cx="459.3" cy="662.8" r="1.6" fill="#3fc81e"/><path transform="translate(482.0 665.8)" d="M-1.8 4.8 L-4.4 1.2 Q-4.8 0 -3.6 0 L-2.2 1.2 V-3 Q-2.2 -4 -1.4 -4 Q-0.7 -4 -0.7 -3.2 V-4 Q-0.7 -4.9 0.1 -4.9 Q0.9 -4.9 0.9 -4 V-3.4 Q0.9 -4.3 1.7 -4.3 Q2.5 -4.3 2.5 -3.4 V-2.6 Q2.5 -3.4 3.3 -3.4 Q4.1 -3.4 4.1 -2.6 V1.5 Q4.1 3.4 2.9 4.8 Z" fill="#f6f6f6" stroke="#2a2a2a" stroke-width="1"/><path transform="translate(482.0 665.8)" d="M-2 -3.2 Q0.5 -5.6 4 -2.8" stroke="#333" stroke-width="1.6" fill="none"/><rect x="476.9" y="661.7" width="2" height="2" fill="#2f7a1c"/><text transform="translate(523.2 499.8) scale(0.99 1)" font-size="10" text-anchor="start" fill="#d9dde8" >Chart 3</text><rect x="522.7" y="502.4" width="259.5" height="169.0" rx="4.5" fill="#d1ddf9" stroke="#e4eefd" stroke-width="1"/><rect x="578.4" y="513.5" width="189.2" height="124.2" fill="#fafafa"/><path d="M578.4 539.1H767.6M578.4 563.2H767.6M578.4 588.0H767.6M578.4 612.1H767.6M599.4 513.5V637.7M646.3 513.5V637.7M693.2 513.5V637.7M740.3 513.5V637.7" stroke="#c6c4ee" stroke-width="1.25" fill="none"/><polygon points="578.8,538.4 579.6,538.8 580.4,538.6 581.2,538.2 582.0,538.1 582.8,538.2 583.6,538.5 584.4,538.2 585.2,538.7 586.0,538.7 586.8,539.1 587.6,539.0 588.4,538.2 589.2,538.4 590.0,538.3 590.8,538.7 591.6,538.6 592.4,538.2 593.2,538.8 594.0,538.4 594.8,542.3 595.6,542.6 596.4,542.0 597.2,542.3 598.0,542.5 598.8,529.1 599.6,528.5 600.4,528.3 601.2,528.1 602.0,528.9 602.8,529.0 603.6,537.6 604.4,537.6 605.2,537.9 606.0,537.7 606.8,537.4 607.6,538.0 608.4,538.3 609.2,538.0 610.0,537.7 610.8,537.9 611.6,537.9 612.4,538.1 613.2,538.5 614.0,538.2 614.8,538.6 615.6,538.9 616.4,538.4 617.2,538.5 618.0,539.1 618.8,538.3 619.6,538.3 620.4,538.7 621.2,541.8 622.0,542.2 622.8,542.8 623.6,542.3 624.4,542.5 625.2,542.7 626.0,529.0 626.8,528.5 627.6,528.2 628.4,528.2 629.2,528.3 630.0,528.4 630.8,536.9 631.6,537.1 632.4,537.2 633.2,537.9 634.0,537.6 634.8,537.8 635.6,538.4 636.4,538.1 637.2,537.8 638.0,538.2 638.8,538.7 639.6,538.0 640.4,538.6 641.2,538.6 642.0,538.6 642.8,539.0 643.6,538.4 644.4,538.3 645.2,538.6 646.0,538.4 646.8,538.9 647.6,539.0 648.4,542.6 649.2,542.0 650.0,542.2 650.8,541.8 651.6,542.1 652.4,529.1 653.2,529.0 654.0,529.1 654.8,528.3 655.6,528.3 656.4,528.7 657.2,528.9 658.0,537.6 658.8,537.2 659.6,538.1 660.4,538.0 661.2,537.5 662.0,537.8 662.8,538.5 663.6,538.0 664.4,538.5 665.2,538.0 666.0,538.8 666.8,538.2 667.6,539.1 668.4,538.5 669.2,538.2 670.0,539.1 670.8,538.6 671.6,538.5 672.4,538.9 673.2,538.4 674.0,538.3 674.8,538.4 675.6,541.9 676.4,542.2 677.2,542.4 678.0,542.2 678.8,542.3 679.6,528.6 680.4,528.5 681.2,528.1 682.0,528.3 682.8,528.8 683.6,528.4 684.4,528.7 685.2,537.1 686.0,537.3 686.8,538.0 687.6,537.8 688.4,538.3 689.2,538.1 690.0,538.1 690.8,538.1 691.6,538.2 692.4,538.6 693.2,538.9 694.0,538.7 694.8,538.9 695.6,538.2 696.4,538.2 697.2,538.2 698.0,538.9 698.8,538.3 699.6,538.8 700.4,539.0 701.2,538.3 702.0,538.5 702.8,542.8 703.6,542.0 704.4,542.3 705.2,542.0 706.0,542.5 706.8,542.4 707.6,528.1 708.4,528.7 709.2,528.2 710.0,528.9 710.8,528.2 711.6,528.1 712.4,537.2 713.2,537.5 714.0,538.0 714.8,537.4 715.6,537.9 716.4,537.5 717.2,538.2 718.0,537.7 718.8,538.4 719.6,537.9 720.4,538.0 721.2,538.5 722.0,538.7 722.8,538.4 723.6,538.6 724.4,538.2 725.2,538.2 726.0,538.4 726.8,538.9 727.6,538.6 728.4,538.4 729.2,538.4 730.0,542.5 730.8,542.0 731.6,542.7 732.4,542.6 733.2,542.3 734.0,528.5 734.8,528.8 735.6,528.4 736.4,528.8 737.2,528.5 738.0,528.2 738.8,528.2 739.6,537.2 740.4,537.2 741.2,538.0 742.0,537.5 742.8,537.6 743.6,537.6 744.4,537.8 745.2,538.6 746.0,538.0 746.8,538.1 747.6,537.9 748.4,538.5 749.2,538.3 750.0,538.1 750.8,538.2 751.6,538.1 752.4,538.4 753.2,538.7 754.0,538.9 754.8,538.8 755.6,538.5 756.4,539.1 757.2,542.5 758.0,541.8 758.8,542.7 759.6,542.5 760.4,541.9 761.2,528.6 762.0,528.9 762.8,528.7 763.6,528.8 764.4,528.3 765.2,528.2 766.0,528.2 766.8,537.5 767.6,537.7 767.6,608.0 766.8,607.8 766.0,601.8 765.2,601.4 764.4,601.0 763.6,601.7 762.8,601.9 762.0,601.8 761.2,601.8 760.4,613.2 759.6,613.5 758.8,613.3 758.0,613.5 757.2,613.3 756.4,609.6 755.6,609.8 754.8,610.4 754.0,610.2 753.2,610.0 752.4,609.7 751.6,609.5 750.8,609.9 750.0,609.8 749.2,610.0 748.4,609.9 747.6,609.5 746.8,609.3 746.0,609.7 745.2,609.1 744.4,609.3 743.6,608.6 742.8,608.4 742.0,608.0 741.2,608.2 740.4,608.2 739.6,607.3 738.8,601.7 738.0,601.1 737.2,601.3 736.4,601.6 735.6,601.8 734.8,602.0 734.0,601.5 733.2,613.5 732.4,613.1 731.6,612.8 730.8,613.2 730.0,613.3 729.2,609.5 728.4,609.5 727.6,609.7 726.8,609.8 726.0,609.8 725.2,609.7 724.4,609.7 723.6,609.7 722.8,609.6 722.0,610.4 721.2,609.6 720.4,610.0 719.6,609.8 718.8,609.5 718.0,609.4 717.2,608.7 716.4,608.2 715.6,608.6 714.8,608.6 714.0,607.8 713.2,608.2 712.4,607.2 711.6,601.8 710.8,601.3 710.0,602.0 709.2,602.0 708.4,601.5 707.6,601.3 706.8,613.1 706.0,612.7 705.2,613.0 704.4,613.0 703.6,613.1 702.8,613.5 702.0,610.0 701.2,610.5 700.4,610.5 699.6,609.6 698.8,610.2 698.0,610.4 697.2,610.2 696.4,609.7 695.6,609.9 694.8,609.6 694.0,610.4 693.2,609.5 692.4,609.9 691.6,609.7 690.8,609.1 690.0,609.1 689.2,608.7 688.4,608.4 687.6,608.6 686.8,608.1 686.0,607.7 685.2,607.8 684.4,601.8 683.6,601.5 682.8,601.6 682.0,601.5 681.2,601.8 680.4,601.2 679.6,601.0 678.8,613.2 678.0,613.6 677.2,613.6 676.4,613.2 675.6,613.6 674.8,609.9 674.0,610.1 673.2,609.8 672.4,609.7 671.6,610.4 670.8,610.4 670.0,610.1 669.2,609.5 668.4,610.0 667.6,610.2 666.8,610.2 666.0,610.0 665.2,609.1 664.4,608.9 663.6,609.5 662.8,608.7 662.0,609.0 661.2,608.7 660.4,608.2 659.6,608.3 658.8,608.0 658.0,607.9 657.2,601.5 656.4,601.9 655.6,601.2 654.8,601.2 654.0,601.4 653.2,602.0 652.4,601.4 651.6,613.4 650.8,613.0 650.0,612.7 649.2,613.2 648.4,613.4 647.6,610.3 646.8,610.5 646.0,609.7 645.2,610.3 644.4,610.3 643.6,609.9 642.8,610.2 642.0,610.5 641.2,609.5 640.4,609.6 639.6,610.3 638.8,609.3 638.0,609.2 637.2,608.8 636.4,609.0 635.6,609.3 634.8,608.2 634.0,608.2 633.2,607.8 632.4,608.4 631.6,607.7 630.8,607.3 630.0,601.1 629.2,601.2 628.4,601.1 627.6,601.6 626.8,601.4 626.0,601.8 625.2,613.5 624.4,612.8 623.6,613.3 622.8,613.4 622.0,613.3 621.2,613.1 620.4,609.8 619.6,610.0 618.8,609.7 618.0,609.7 617.2,610.4 616.4,609.9 615.6,610.4 614.8,610.4 614.0,609.9 613.2,610.4 612.4,609.5 611.6,609.8 610.8,608.9 610.0,609.1 609.2,609.1 608.4,608.5 607.6,609.0 606.8,608.5 606.0,608.3 605.2,608.4 604.4,607.7 603.6,607.6 602.8,601.3 602.0,601.6 601.2,601.7 600.4,601.5 599.6,601.8 598.8,601.1 598.0,613.0 597.2,613.6 596.4,613.3 595.6,613.4 594.8,613.0 594.0,610.1 593.2,609.9 592.4,609.7 591.6,609.6 590.8,609.9 590.0,610.1 589.2,610.3 588.4,609.6 587.6,609.8 586.8,609.5 586.0,609.9 585.2,610.4 584.4,609.7 583.6,610.3 582.8,609.6 582.0,609.9 581.2,610.0 580.4,609.9 579.6,609.6 578.8,609.7" fill="#0d5589"/><rect x="745.0" y="517.0" width="22.6" height="17.2" fill="#fafafa"/><path d="M746.4 529.6L754.5 520.6L762.4 530.0L766.1 526.0" stroke="#2c6a9c" stroke-width="1" fill="none"/><text transform="translate(735.8 528.6) scale(0.99 1)" font-size="10" text-anchor="end" fill="#1c1c26" >Vdc</text><text transform="translate(571.6 517.8) scale(0.99 1)" font-size="9.7" text-anchor="end" fill="#0e0e16"  stroke="#0e0e16" stroke-width="0.3">413.6</text><text transform="translate(571.6 542.2) scale(0.99 1)" font-size="9.7" text-anchor="end" fill="#0e0e16"  stroke="#0e0e16" stroke-width="0.3">413.5</text><text transform="translate(571.6 566.3) scale(0.99 1)" font-size="9.7" text-anchor="end" fill="#0e0e16"  stroke="#0e0e16" stroke-width="0.3">413.4</text><text transform="translate(571.6 591.1) scale(0.99 1)" font-size="9.7" text-anchor="end" fill="#0e0e16"  stroke="#0e0e16" stroke-width="0.3">413.3</text><text transform="translate(571.6 615.2) scale(0.99 1)" font-size="9.7" text-anchor="end" fill="#0e0e16"  stroke="#0e0e16" stroke-width="0.3">413.2</text><text transform="translate(571.6 639.4) scale(0.99 1)" font-size="9.7" text-anchor="end" fill="#0e0e16"  stroke="#0e0e16" stroke-width="0.3">413.1</text><path d="M573.5 514.9h3.4M573.5 539.3h3.4M573.5 563.4h3.4M573.5 588.2h3.4M573.5 612.3h3.4M573.5 636.5h3.4" stroke="#0e0e16" stroke-width="1.2" fill="none"/><text transform="translate(578.4 653.4) scale(0.99 1)" font-size="9.7" text-anchor="middle" fill="#0e0e16"  stroke="#0e0e16" stroke-width="0.3">97.81</text><text transform="translate(599.4 653.4) scale(0.99 1)" font-size="9.7" text-anchor="middle" fill="#0e0e16"  stroke="#0e0e16" stroke-width="0.3">100</text><text transform="translate(646.3 653.4) scale(0.99 1)" font-size="9.7" text-anchor="middle" fill="#0e0e16"  stroke="#0e0e16" stroke-width="0.3">105</text><text transform="translate(693.2 653.4) scale(0.99 1)" font-size="9.7" text-anchor="middle" fill="#0e0e16"  stroke="#0e0e16" stroke-width="0.3">110</text><text transform="translate(740.3 653.4) scale(0.99 1)" font-size="9.7" text-anchor="middle" fill="#0e0e16"  stroke="#0e0e16" stroke-width="0.3">115</text><text transform="translate(766.4 653.4) scale(0.99 1)" font-size="9.7" text-anchor="middle" fill="#0e0e16"  stroke="#0e0e16" stroke-width="0.3">117.81</text><path d="M578.4 638.7v3.5M599.4 638.7v3.5M646.3 638.7v3.5M693.2 638.7v3.5M740.3 638.7v3.5M766.4 638.7v3.5" stroke="#15151f" stroke-width="1.4" fill="none"/><text transform="translate(672.4 667.8) scale(1 1)" font-size="10" text-anchor="middle" fill="#0e0e16"  stroke="#0e0e16" stroke-width="0.3">时间</text><text transform="translate(541.6 579.0) rotate(-90)" font-size="10" text-anchor="middle" fill="#0e0e16" stroke="#0e0e16" stroke-width="0.22">幅值</text><path d="M729.2 661.9h10.6M734.5 657.1v9.8" stroke="#15151c" stroke-width="1.5" fill="none"/><rect x="728.8" y="657.7" width="2.1" height="2.1" fill="#1f6b12"/><circle cx="755.2" cy="660.4" r="3.4" fill="#e6e2fb" stroke="#15151c" stroke-width="1.2"/><path d="M752.7 663.0l-3.7 3.9" stroke="#15151c" stroke-width="1.8"/><path d="M753.2 660.4h4M755.2 658.4v4" stroke="#15151c" stroke-width="1.1"/><path d="M754.1 665.0h4.2l-2.1 2.1z" fill="#15151c"/><circle cx="748.6" cy="658.7" r="1.6" fill="#3fc81e"/><path transform="translate(771.3 661.7)" d="M-1.8 4.8 L-4.4 1.2 Q-4.8 0 -3.6 0 L-2.2 1.2 V-3 Q-2.2 -4 -1.4 -4 Q-0.7 -4 -0.7 -3.2 V-4 Q-0.7 -4.9 0.1 -4.9 Q0.9 -4.9 0.9 -4 V-3.4 Q0.9 -4.3 1.7 -4.3 Q2.5 -4.3 2.5 -3.4 V-2.6 Q2.5 -3.4 3.3 -3.4 Q4.1 -3.4 4.1 -2.6 V1.5 Q4.1 3.4 2.9 4.8 Z" fill="#f6f6f6" stroke="#2a2a2a" stroke-width="1"/><path transform="translate(771.3 661.7)" d="M-2 -3.2 Q0.5 -5.6 4 -2.8" stroke="#333" stroke-width="1.6" fill="none"/><rect x="766.2" y="657.6" width="2" height="2" fill="#2f7a1c"/><text transform="translate(808.8 495.8) scale(0.99 1)" font-size="10" text-anchor="start" fill="#d9dde8" >Chart 5</text><rect x="808.1" y="498.4" width="259.0" height="169.1" rx="4.5" fill="#d1ddf9" stroke="#e4eefd" stroke-width="1"/><rect x="866.0" y="509.3" width="196.0" height="124.1" fill="#fafafa"/><path d="M866.0 535.4H1062.0M866.0 559.5H1062.0M866.0 584.3H1062.0M866.0 608.4H1062.0M886.6 509.3V633.4M933.4 509.3V633.4M979.4 509.3V633.4M1025.7 509.3V633.4M1051.5 509.3V633.4" stroke="#c6c4ee" stroke-width="1.25" fill="none"/><rect x="866" y="528.9" width="196" height="27.8" fill="#0d5589"/><polygon points="866.0,592.4 867.0,592.4 868.0,592.4 869.0,592.4 870.0,592.4 871.0,592.4 872.0,592.4 873.0,592.4 874.0,592.4 875.0,592.4 876.0,592.4 877.0,592.4 878.0,592.4 879.0,592.4 880.0,590.2 881.0,590.2 882.0,590.2 883.0,590.2 884.0,590.2 885.0,590.2 886.0,592.4 887.0,592.4 888.0,592.4 889.0,592.4 890.0,592.4 891.0,592.4 892.0,592.4 893.0,592.4 894.0,592.4 895.0,592.4 896.0,592.4 897.0,592.4 898.0,592.4 899.0,592.4 900.0,592.4 901.0,592.4 902.0,592.4 903.0,592.4 904.0,592.4 905.0,592.4 906.0,592.4 907.0,592.4 908.0,592.4 909.0,592.4 910.0,592.4 911.0,592.4 912.0,592.4 913.0,592.4 914.0,592.4 915.0,592.4 916.0,592.4 917.0,592.4 918.0,592.4 919.0,592.4 920.0,592.4 921.0,592.4 922.0,592.4 923.0,592.4 924.0,592.4 925.0,592.4 926.0,592.4 927.0,592.4 928.0,592.4 929.0,592.4 930.0,592.4 931.0,592.4 932.0,592.4 933.0,592.4 934.0,590.2 935.0,590.2 936.0,590.2 937.0,590.2 938.0,590.2 939.0,590.2 940.0,592.4 941.0,592.4 942.0,592.4 943.0,592.4 944.0,592.4 945.0,592.4 946.0,592.4 947.0,592.4 948.0,592.4 949.0,592.4 950.0,592.4 951.0,592.4 952.0,592.4 953.0,592.4 954.0,592.4 955.0,592.4 956.0,592.4 957.0,592.4 958.0,592.4 959.0,592.4 960.0,592.4 961.0,592.4 962.0,592.4 963.0,592.4 964.0,592.4 965.0,592.4 966.0,592.4 967.0,592.4 968.0,592.4 969.0,592.4 970.0,592.4 971.0,592.4 972.0,592.4 973.0,592.4 974.0,592.4 975.0,592.4 976.0,592.4 977.0,592.4 978.0,592.4 979.0,592.4 980.0,592.4 981.0,592.4 982.0,592.4 983.0,592.4 984.0,592.4 985.0,592.4 986.0,592.4 987.0,590.2 988.0,590.2 989.0,590.2 990.0,590.2 991.0,590.2 992.0,590.2 993.0,590.2 994.0,592.4 995.0,592.4 996.0,592.4 997.0,592.4 998.0,592.4 999.0,592.4 1000.0,592.4 1001.0,592.4 1002.0,592.4 1003.0,592.4 1004.0,592.4 1005.0,592.4 1006.0,592.4 1007.0,592.4 1008.0,592.4 1009.0,592.4 1010.0,592.4 1011.0,592.4 1012.0,592.4 1013.0,592.4 1014.0,592.4 1015.0,592.4 1016.0,592.4 1017.0,592.4 1018.0,592.4 1019.0,592.4 1020.0,592.4 1021.0,592.4 1022.0,592.4 1023.0,592.4 1024.0,592.4 1025.0,592.4 1026.0,592.4 1027.0,592.4 1028.0,592.4 1029.0,592.4 1030.0,592.4 1031.0,592.4 1032.0,592.4 1033.0,592.4 1034.0,592.4 1035.0,592.4 1036.0,592.4 1037.0,592.4 1038.0,592.4 1039.0,592.4 1040.0,592.4 1041.0,590.2 1042.0,590.2 1043.0,590.2 1044.0,590.2 1045.0,590.2 1046.0,590.2 1047.0,590.2 1048.0,592.4 1049.0,592.4 1050.0,592.4 1051.0,592.4 1052.0,592.4 1053.0,592.4 1054.0,592.4 1055.0,592.4 1056.0,592.4 1057.0,592.4 1058.0,592.4 1059.0,592.4 1060.0,592.4 1061.0,592.4 1062.0,592.4 1062.0,623.6 866.0,623.6" fill="#ff0000"/><text transform="translate(859.2 513.8) scale(0.99 1)" font-size="9.7" text-anchor="end" fill="#0e0e16"  stroke="#0e0e16" stroke-width="0.3">8000</text><text transform="translate(859.2 538.5) scale(0.99 1)" font-size="9.7" text-anchor="end" fill="#0e0e16"  stroke="#0e0e16" stroke-width="0.3">6000</text><text transform="translate(859.2 562.6) scale(0.99 1)" font-size="9.7" text-anchor="end" fill="#0e0e16"  stroke="#0e0e16" stroke-width="0.3">4000</text><text transform="translate(859.2 587.4) scale(0.99 1)" font-size="9.7" text-anchor="end" fill="#0e0e16"  stroke="#0e0e16" stroke-width="0.3">2000</text><text transform="translate(859.2 611.5) scale(0.99 1)" font-size="9.7" text-anchor="end" fill="#0e0e16"  stroke="#0e0e16" stroke-width="0.3">0</text><text transform="translate(859.2 635.9) scale(0.99 1)" font-size="9.7" text-anchor="end" fill="#0e0e16"  stroke="#0e0e16" stroke-width="0.3">-2000</text><path d="M861.1 510.9h3.4M861.1 535.6h3.4M861.1 559.7h3.4M861.1 584.5h3.4M861.1 608.6h3.4M861.1 633.0h3.4" stroke="#0e0e16" stroke-width="1.2" fill="none"/><text transform="translate(866.0 649.0) scale(0.99 1)" font-size="9.7" text-anchor="middle" fill="#0e0e16"  stroke="#0e0e16" stroke-width="0.3">97.79</text><text transform="translate(886.6 649.0) scale(0.99 1)" font-size="9.7" text-anchor="middle" fill="#0e0e16"  stroke="#0e0e16" stroke-width="0.3">100</text><text transform="translate(933.4 649.0) scale(0.99 1)" font-size="9.7" text-anchor="middle" fill="#0e0e16"  stroke="#0e0e16" stroke-width="0.3">105</text><text transform="translate(979.4 649.0) scale(0.99 1)" font-size="9.7" text-anchor="middle" fill="#0e0e16"  stroke="#0e0e16" stroke-width="0.3">110</text><text transform="translate(1025.7 649.0) scale(0.99 1)" font-size="9.7" text-anchor="middle" fill="#0e0e16"  stroke="#0e0e16" stroke-width="0.3">115</text><text transform="translate(1051.5 649.0) scale(0.99 1)" font-size="9.7" text-anchor="middle" fill="#0e0e16"  stroke="#0e0e16" stroke-width="0.3">117.79</text><path d="M866.0 634.4v3.5M886.6 634.4v3.5M933.4 634.4v3.5M979.4 634.4v3.5M1025.7 634.4v3.5M1051.5 634.4v3.5" stroke="#15151f" stroke-width="1.4" fill="none"/><text transform="translate(959.0 663.6) scale(1 1)" font-size="10" text-anchor="middle" fill="#0e0e16"  stroke="#0e0e16" stroke-width="0.3">时间</text><text transform="translate(828.0 575.0) rotate(-90)" font-size="10" text-anchor="middle" fill="#0e0e16" stroke="#0e0e16" stroke-width="0.22">幅值</text><path d="M1014.7 658.0h10.6M1020.0 653.2v9.8" stroke="#15151c" stroke-width="1.5" fill="none"/><rect x="1014.3" y="653.8" width="2.1" height="2.1" fill="#1f6b12"/><circle cx="1040.7" cy="656.5" r="3.4" fill="#e6e2fb" stroke="#15151c" stroke-width="1.2"/><path d="M1038.2 659.1l-3.7 3.9" stroke="#15151c" stroke-width="1.8"/><path d="M1038.7 656.5h4M1040.7 654.5v4" stroke="#15151c" stroke-width="1.1"/><path d="M1039.6 661.1h4.2l-2.1 2.1z" fill="#15151c"/><circle cx="1034.1" cy="654.8" r="1.6" fill="#3fc81e"/><rect x="1030" y="514" width="22" height="14" fill="#fafafa"/><rect x="1030" y="532.6" width="22" height="16.5" fill="#fafafa"/><path d="M1031.1 526.1L1039.2 517.1L1047.1 526.5L1050.8 522.5" stroke="#2c6a9c" stroke-width="1" fill="none"/><path d="M1031.1 545.2L1039.2 536.2L1047.1 545.6L1050.8 541.6" stroke="#ff2a2a" stroke-width="1" fill="none"/><text transform="translate(1021.2 522.8) scale(0.99 1)" font-size="8.6" text-anchor="end" fill="#14141c" >P</text><text transform="translate(1021.6 543.4) scale(0.99 1)" font-size="9.6" text-anchor="end" fill="#14141c" >Q</text></svg>
<div class="pg on" style="left:957px">1</div>
<div class="pg" style="left:982px">2</div>
<div class="pg" style="left:1008px">3</div>
<div class="pg" style="left:1033px">4</div>
<style>#ov{position:absolute;left:157px;top:150px;width:811px;height:158px;background:#323b4f;border:2px solid #1c66bd;box-shadow:0 2px 10px rgba(0,0,0,.3)}.lb{position:absolute;font-size:15.5px;line-height:18px;color:#f4f4f6;white-space:nowrap}.in{position:absolute;width:189px;height:42px;background:#d3e0fa;border-radius:4px;font-size:16px;line-height:20px;color:#0a0a14;padding-left:9px;letter-spacing:0.42px}.in.sp{border:2px solid #97b3f2;border-radius:6px;padding-left:7px;height:43px}.in span{position:absolute;top:11px}.in.sp span{top:10px}</style><div id="ov"></div><div class="lb" style="left:172px;top:160px;letter-spacing:0.00px">P_ref</div><div class="in sp" style="left:171px;top:180px"><span>100000</span></div><svg class="abs" style="left:335px;top:186px" width="20" height="32" viewBox="0 0 20 32"><path d="M2 10.3L10 2.8L18 10.3Z M2 21.2L10 28.7L18 21.2Z" fill="#9bb3ee"/></svg><div class="lb" style="left:372px;top:160px;letter-spacing:0.50px">Vdc_ref</div><div class="in sp" style="left:371px;top:180px"><span>500</span></div><svg class="abs" style="left:535px;top:186px" width="20" height="32" viewBox="0 0 20 32"><path d="M2 10.3L10 2.8L18 10.3Z M2 21.2L10 28.7L18 21.2Z" fill="#9bb3ee"/></svg><div class="lb" style="left:572px;top:160px;letter-spacing:1.05px">Tempreature</div><div class="in sp" style="left:571px;top:180px"><span>25</span></div><svg class="abs" style="left:735px;top:186px" width="20" height="32" viewBox="0 0 20 32"><path d="M2 10.3L10 2.8L18 10.3Z M2 21.2L10 28.7L18 21.2Z" fill="#9bb3ee"/></svg><div class="lb" style="left:765px;top:160px;letter-spacing:0.19px">Sunshine</div><div class="in sp" style="left:764px;top:180px"><span>1000</span></div><svg class="abs" style="left:928px;top:186px" width="20" height="32" viewBox="0 0 20 32"><path d="M2 10.3L10 2.8L18 10.3Z M2 21.2L10 28.7L18 21.2Z" fill="#9bb3ee"/></svg><div class="lb" style="left:172px;top:233px;letter-spacing:0.00px">PV_Power</div><div class="in" style="left:171px;top:254px"><span>4134.67</span></div><div class="lb" style="left:372px;top:233px;letter-spacing:-0.10px">Bat_SOC</div><div class="in" style="left:371px;top:254px"><span>69.9387</span></div><div class="lb" style="left:572px;top:233px;letter-spacing:1.27px">Idc</div><div class="in" style="left:571px;top:254px"><span>2.55685</span></div>
<div class="st" style="left:30px">就绪</div>
<div class="st" style="left:209px">当前工作路径<span style="margin-left:3px">:</span></div>
<div class="st" id="path" style="left:291px"><span style="font-size:11px;letter-spacing:0.19px">C:\Users\Consumer\Desktop\24.5\EGBox\</span>新能源实时仿真实验例程<span style="font-size:11px;margin:0 1.4px">\</span>多能源混合系统实验<span style="font-size:11px">\</span></div>
<div class="st" style="left:828px">远程模式<span style="margin-left:2.5px">:</span></div>
<div class="st" style="left:888px">未启动</div>
<div class="st" style="left:943px;color:#4fc000">运行状态<span style="margin-left:2.5px">:</span></div>
<div class="st" style="left:1003px;color:#4fc000">运行中...</div>
</div></div></body></html>
